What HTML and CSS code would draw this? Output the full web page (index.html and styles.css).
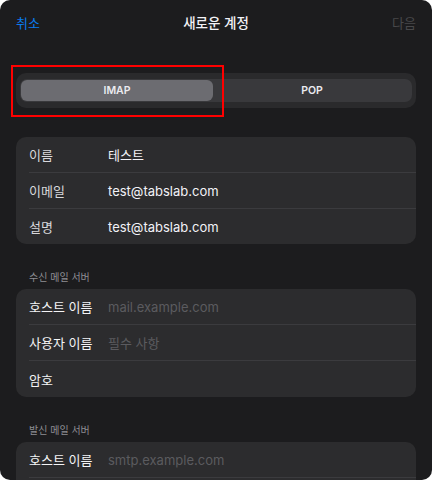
FILE: index.html
```html
<!DOCTYPE html>
<html lang="ko">
<head>
  <meta charset="UTF-8">
  <meta name="viewport" content="width=device-width, initial-scale=1.0">
  <title>새로운 계정</title>
  <link rel="stylesheet" href="styles.css">
</head>
<body>
  <div class="sheet">
    <div class="nav">
      <span class="nav-cancel">취소</span>
      <span class="nav-title">새로운 계정</span>
      <span class="nav-next">다음</span>
    </div>

    <div class="segment-box">
      <div class="segment-track">
        <div class="segment selected">IMAP</div>
        <div class="segment">POP</div>
      </div>
      <div class="highlight"></div>
    </div>

    <div class="group first">
      <div class="row"><span class="label">이름</span><span class="value">테스트</span></div>
      <div class="row"><span class="label">이메일</span><span class="value">test@tabslab.com</span></div>
      <div class="row"><span class="label">설명</span><span class="value">test@tabslab.com</span></div>
    </div>

    <div class="section-title">수신 메일 서버</div>
    <div class="group server">
      <div class="row"><span class="label">호스트 이름</span><span class="placeholder">mail.example.com</span></div>
      <div class="row"><span class="label">사용자 이름</span><span class="placeholder">필수 사항</span></div>
      <div class="row tall"><span class="label">암호</span></div>
    </div>

    <div class="section-title">발신 메일 서버</div>
    <div class="group server">
      <div class="row"><span class="label">호스트 이름</span><span class="placeholder">smtp.example.com</span></div>
      <div class="row"></div>
    </div>
  </div>
</body>
</html>
```

FILE: styles.css
```css
body {
  margin: 0;
  background-color: #ffffff;
  font-family: "Inter", "Noto Sans CJK KR", sans-serif;
}
.sheet {
  width: 432px;
  height: 480px;
  background-color: #1c1c1e;
  border-radius: 10px;
  overflow: hidden;
}
.nav {
  height: 44px;
  display: flex;
  align-items: center;
  justify-content: space-between;
  padding: 0 16px;
  font-size: 13px;
}
.nav-cancel {
  color: #0a7cf0;
}
.nav-title {
  color: #f2f2f7;
  font-weight: 500;
  font-size: 13.5px;
}
.nav-next {
  color: #48484a;
}
.segment-box {
  position: relative;
  margin: 29px 16px 0;
  height: 35px;
  padding: 6px 4px;
  box-sizing: border-box;
  background-color: #2a2a2c;
  border-radius: 10px;
}
.segment-track {
  display: flex;
  height: 23px;
  padding: 1px;
  box-sizing: border-box;
  background-color: #39393c;
  border-radius: 7px;
}
.segment {
  flex: 1;
  display: flex;
  align-items: center;
  justify-content: center;
  color: #ebebf0;
  font-size: 10.5px;
  font-weight: 600;
  border-radius: 6px;
}
.segment.selected {
  flex: 0 0 192px;
  background-color: #6c6c71;
}
.highlight {
  position: absolute;
  left: -5px;
  top: -8px;
  width: 209px;
  height: 48px;
  border: 2px solid #ff0000;
}
.group {
  margin: 0 16px;
  background-color: #2c2c2e;
  border-radius: 10px;
}
.group.first {
  margin-top: 29px;
}
.row {
  display: flex;
  align-items: center;
  box-sizing: border-box;
  height: 35px;
  margin-left: 13px;
  font-size: 13px;
}
.row + .row {
  height: 36px;
  border-top: 1px solid #3b3b3e;
}
.row.tall {
  height: 37px;
}
.label {
  width: 79px;
  flex: none;
  color: #d8d8dc;
}
.server .label {
  color: #f4f4f6;
}
.value {
  color: #f2f2f7;
}
.placeholder {
  color: #5b5b5f;
}
.section-title {
  padding: 27px 29px 6px;
  font-size: 10px;
  line-height: 12px;
  color: #8e8e93;
}
```
